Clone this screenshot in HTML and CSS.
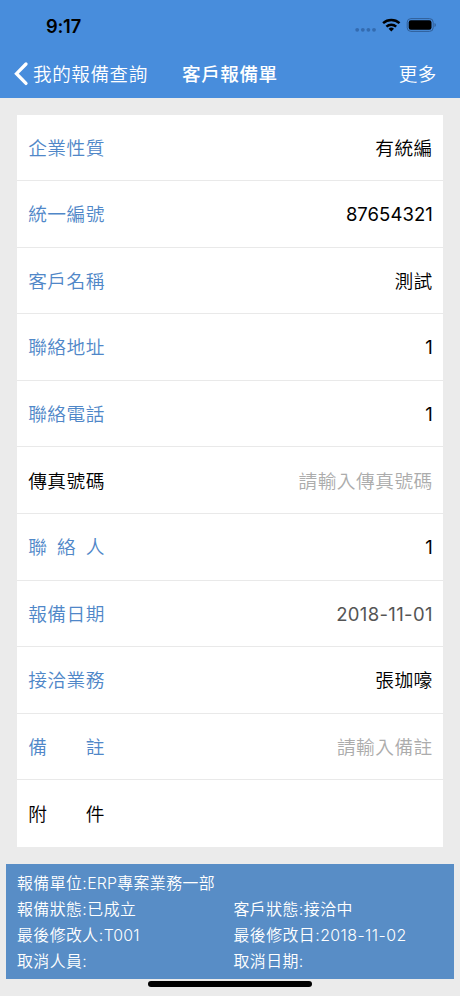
FILE: index.html
```html
<!DOCTYPE html>
<html lang="zh-Hant">
<head>
<meta charset="utf-8">
<title>客戶報備單</title>
<link rel="stylesheet" href="styles.css">
</head>
<body>
<div class="screen">
  <header class="top">
    <div class="status">
      <span class="time">9:17</span>
      <svg class="indicators" width="82" height="16" viewBox="0 0 82 16">
        <g fill="#336bb0"><circle cx="3.2" cy="12.8" r="1.9"/><circle cx="8.8" cy="12.8" r="1.9"/><circle cx="14.4" cy="12.8" r="1.9"/><circle cx="20" cy="12.8" r="1.9"/></g>
        <g fill="none" stroke="#000" stroke-width="2.5"><path d="M29.1 6.1a12.2 12.2 0 0 1 16.4 0"/><path d="M32.4 9.6a7.3 7.3 0 0 1 9.8 0"/></g>
        <path d="M34.6 11.8a4 4 0 0 1 5.4 0l-2.7 2.7z"/>
        <rect x="53.2" y="1.6" width="26" height="12.8" rx="3.7" fill="none" stroke="#305f99"/>
        <rect x="54.7" y="3.3" width="22.8" height="9.4" rx="2.2"/>
        <path d="M80.5 5.9v4.2q1.4-.5 1.4-2.1t-1.4-2.1z" fill="#305f99"/>
      </svg>
    </div>
    <nav class="nav">
      <div class="back">
        <svg width="16" height="26" viewBox="0 0 16 26"><path d="M13 3L3.5 12.7l9.5 9.7" fill="none" stroke="#fff" stroke-width="3.3" stroke-linecap="round" stroke-linejoin="miter"/></svg>
        <span>我的報備查詢</span>
      </div>
      <h1 class="title">客戶報備單</h1>
      <span class="more">更多</span>
    </nav>
  </header>
  <main class="card">
    <div class="row"><span class="label">企業性質</span><span class="value">有統編</span></div>
    <div class="row"><span class="label">統一編號</span><span class="value num">87654321</span></div>
    <div class="row"><span class="label">客戶名稱</span><span class="value">測試</span></div>
    <div class="row"><span class="label">聯絡地址</span><span class="value num">1</span></div>
    <div class="row"><span class="label">聯絡電話</span><span class="value num">1</span></div>
    <div class="row"><span class="label dark">傳真號碼</span><span class="value hint">請輸入傳真號碼</span></div>
    <div class="row"><span class="label spread"><span>聯</span><span>絡</span><span>人</span></span><span class="value num">1</span></div>
    <div class="row"><span class="label">報備日期</span><span class="value num date">2018-11-01</span></div>
    <div class="row"><span class="label">接洽業務</span><span class="value">張珈嚎</span></div>
    <div class="row"><span class="label spread"><span>備</span><span>註</span></span><span class="value hint">請輸入備註</span></div>
    <div class="row"><span class="label dark spread"><span>附</span><span>件</span></span></div>
  </main>
  <footer class="info">
    <span class="wide">報備單位:<span class="latin">ERP</span>專案業務一部</span>
    <span>報備狀態:已成立</span><span>客戶狀態:接洽中</span>
    <span>最後修改人:<span class="latin">T001</span></span><span>最後修改日:<span class="latin date-text">2018-11-02</span></span>
    <span>取消人員:</span><span>取消日期:</span>
  </footer>
  <div class="home"></div>
</div>
</body>
</html>
```
FILE: styles.css
```css
* { box-sizing: border-box; }
body { margin: 0; font-family: Inter, "Noto Sans CJK TC", sans-serif; }
.screen { width: 460px; height: 996px; background: #ebebeb; overflow: hidden; display: flex; flex-direction: column; }
.top { height: 98px; background: #488ddc; flex: none; }
.status { height: 50px; display: flex; justify-content: space-between; align-items: center; padding: 0 24px 0 46px; }
.time { font-size: 18.3px; font-weight: 600; line-height: 20px; margin-top: 1px; letter-spacing: -.2px; }
.nav { height: 48px; display: grid; grid-template-columns: 182px 1fr auto; align-items: center; padding: 0 23px 0 0; color: #fff; font-size: 18.6px; font-weight: 350; letter-spacing: .55px; line-height: 28px; }
.back { display: flex; align-items: center; gap: 4px; padding-left: 13px; }
.title { margin: 0; font-size: 18.6px; font-weight: 500; }
.card { margin: 16.5px 17px 0; height: 732.5px; background: #fff; display: grid; grid-template-rows: repeat(11, 1fr); flex: none; }
.row { display: flex; justify-content: space-between; align-items: center; padding: 2.6px 10.2px 0 11.2px; border-bottom: 1px solid #e9e9e9; font-size: 18.7px; letter-spacing: .5px; line-height: 28px; }
.row:last-child { border-bottom: 0; }
.label { color: #5087c8; width: 76.7px; white-space: nowrap; font-weight: 350; }
.dark, .value { color: #000; }
.value { font-weight: 350; }
.spread { display: flex; justify-content: space-between; }
.value.hint { color: #acacac; }
.value.num { font-size: 18.5px; letter-spacing: .05px; font-weight: 400; margin-top: -2.4px; }
.value.date { color: #555; letter-spacing: .35px; }
.info { margin: 17px 6px 0; height: 115px; flex: none; background: #588dc6; color: #fff; display: grid; grid-template-columns: 216.5px 1fr; grid-auto-rows: 26px; align-content: start; padding: 7px 0 0 11px; font-size: 15.9px; font-weight: 350; letter-spacing: .45px; line-height: 26px; white-space: nowrap; }
.wide { grid-column: 1 / -1; }
.latin { letter-spacing: .1px; }
.date-text { letter-spacing: .45px; }
.home { width: 164px; height: 6px; border-radius: 3px; background: #000; margin: 2px 0 0 148px; flex: none; }
```
